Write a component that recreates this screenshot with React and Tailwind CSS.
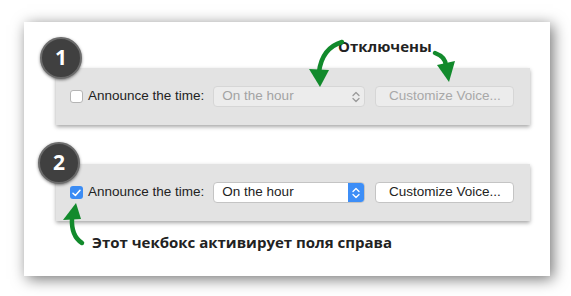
import React from 'react';

function Chevrons({color}){
  return (
    <svg width="8" height="12" viewBox="0 0 8 12" fill="none" stroke={color} strokeWidth="1.3" strokeLinecap="round" strokeLinejoin="round">
      <path d="M1 4.5 L4 1.5 L7 4.5" />
      <path d="M1 7.5 L4 10.5 L7 7.5" />
    </svg>
  );
}

function Badge({n, className}){
  return (
    <div className={"absolute w-[42px] h-[42px] rounded-full bg-[#404040] border-2 border-[#6b6b6b] shadow-[0_1px_3px_rgba(0,0,0,0.5)] flex items-center justify-center text-white text-[21px] font-bold font-['Open_Sans',sans-serif] " + className}>{n}</div>
  );
}

function Row({enabled}){
  return (
    <div className="w-[474px] h-[57px] bg-[#e3e3e3] shadow-[0_2px_4px_rgba(0,0,0,0.35)] flex items-center pl-[14px] font-['Liberation_Sans',Arial,sans-serif] text-[13.5px]">
      {enabled ? (
        <div className="w-[13px] h-[13px] rounded-[3px] bg-[#3b8cf4] flex items-center justify-center">
          <svg width="9" height="8" viewBox="0 0 9 8" fill="none" stroke="white" strokeWidth="1.5" strokeLinecap="round" strokeLinejoin="round"><path d="M1 4.2 L3.4 6.5 L8 1.2" /></svg>
        </div>
      ) : (
        <div className="w-[13px] h-[13px] rounded-[3px] bg-white border border-[#b5b5b5]"></div>
      )}
      <span className="ml-[5px] text-[#222]">Announce the time:</span>
      <div className={"ml-[9px] w-[152px] h-[21px] rounded-[4px] border flex items-center overflow-hidden " + (enabled ? "bg-white border-[#c4c4c4]" : "bg-[#ececec] border-[#d6d6d6]")}>
        <span className={"pl-[8px] flex-1 " + (enabled ? "text-[#222]" : "text-[#a3a3a3]")}>On the hour</span>
        <div className={"w-[16px] h-full flex items-center justify-center " + (enabled ? "bg-[#3d8ef7]" : "")}>
          <Chevrons color={enabled ? "#ffffff" : "#9a9a9a"} />
        </div>
      </div>
      <div className={"ml-[10px] w-[139px] h-[21px] rounded-[4px] border flex items-center justify-center " + (enabled ? "bg-white border-[#c4c4c4] text-[#222]" : "bg-[#ececec] border-[#d6d6d6] text-[#a8a8a8]")}>
        Customize Voice...
      </div>
    </div>
  );
}

export default function App(){
  return (
    <div className="relative w-[571px] h-[296px] bg-white overflow-hidden">
      <div className="relative ml-[24px] mt-[22px] w-[526px] h-[254px] bg-white shadow-[3px_3px_14px_rgba(0,0,0,0.55)] pt-[46px] pl-[32px]">
        <Row enabled={false} />
        <div className="mt-[39px]"><Row enabled={true} /></div>
        <div className="ml-[36px] mt-[11px] font-['Open_Sans',sans-serif] font-bold text-[15px] leading-[20px] text-[#222]">Этот чекбокс активирует поля справа</div>
        <div className="absolute left-[314px] top-[14px] font-['Open_Sans',sans-serif] font-bold text-[15px] leading-[20px] text-[#222]">Отключены</div>
        <Badge n="1" className="left-[16px] top-[15px]" />
        <Badge n="2" className="left-[14px] top-[120px]" />
      </div>
      <svg className="absolute inset-0 pointer-events-none" width="571" height="296" viewBox="0 0 571 296">
        <g fill="none" stroke="#128a2c" strokeWidth="4.5" strokeLinecap="round">
          <path d="M342 42 Q322 48 319 72" />
          <path d="M435 53 Q446 57 446 66" />
          <path d="M82 243 Q71 236 72 218" />
        </g>
        <g fill="#128a2c">
          <polygon points="309,69 329,70 320,87" />
          <polygon points="437,65 455,61 449,82" />
          <polygon points="63,220 81,219 76,203" />
        </g>
      </svg>
    </div>
  );
}
